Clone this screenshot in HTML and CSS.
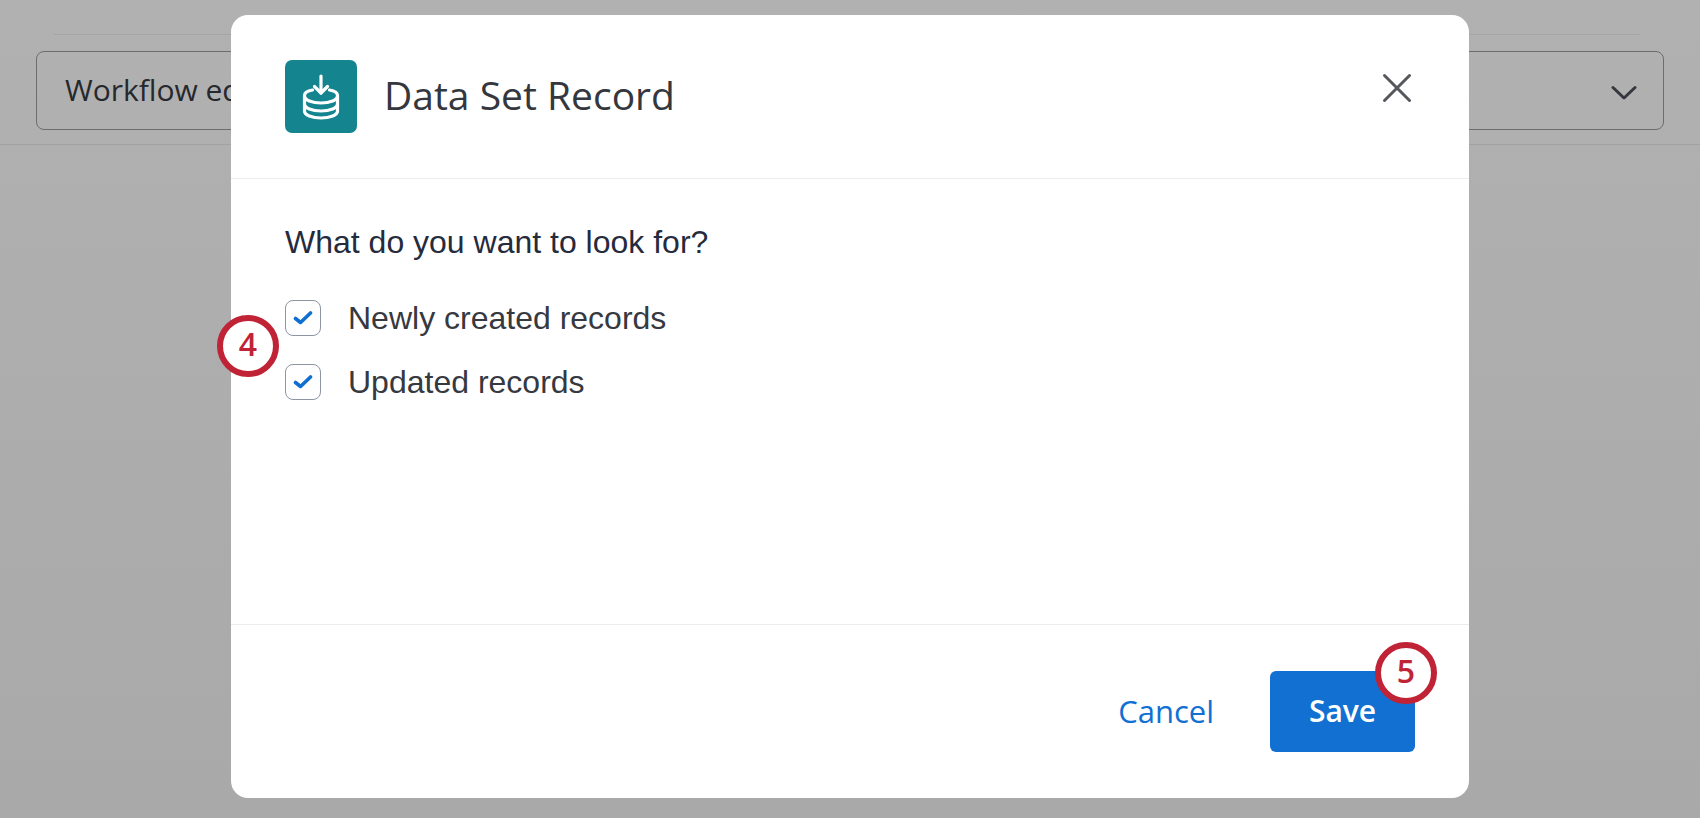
FILE: index.html
```html
<!DOCTYPE html>
<html lang="en">
  <head>
    <meta charset="UTF-8" />
    <title>Data Set Record</title>
    <link rel="stylesheet" href="styles.css">
  </head>
  <body>
    <div class="page">
      <div class="top-line"></div>
      <div class="select-box">
        <span class="select-text">Workflow editor</span>
        <svg class="select-arrow" viewBox="0 0 26 16" width="26" height="16">
          <path d="M2 2.5 L13 13 L24 2.5" fill="none" stroke="#34373d" stroke-width="3" stroke-linecap="round" stroke-linejoin="round" />
        </svg>
      </div>
      <div class="bottom-line"></div>
    </div>

    <div class="modal">
      <div class="modal-header">
        <div class="task-icon">
          <svg viewBox="0 0 72 72" width="72" height="72">
            <g fill="none" stroke="#fff" stroke-width="3.2" stroke-linecap="round" stroke-linejoin="round">
              <path d="M36 15 V32" />
              <path d="M29.5 25.5 L36 32 L42.5 25.5" />
              <path d="M27.5 29 C22 30 19.5 32 19.5 34.5 V50 C19.5 54 27 57 36 57 C45 57 52.5 54 52.5 50 V34.5 C52.5 32 50 30 44.5 29" />
              <path d="M19.5 35 C19.5 39 27 42 36 42 C45 42 52.5 39 52.5 35" />
              <path d="M19.5 43 C19.5 47 27 50 36 50 C45 50 52.5 47 52.5 43" />
            </g>
          </svg>
        </div>
        <h2 class="modal-title">Data Set Record</h2>
        <svg class="close-icon" viewBox="0 0 30 30" width="30" height="30">
          <path d="M2.5 2.5 L27.5 27.5 M27.5 2.5 L2.5 27.5" fill="none" stroke="#54575c" stroke-width="3" stroke-linecap="round" />
        </svg>
      </div>

      <div class="modal-body">
        <p class="question">What do you want to look for?</p>
        <label class="check-row">
          <span class="checkbox">
            <svg viewBox="0 0 20 16" width="20" height="16">
              <path d="M2.5 8.5 L7.5 12.5 L17.5 3" fill="none" stroke="#0f6fd1" stroke-width="3.6" stroke-linecap="round" stroke-linejoin="round" />
            </svg>
          </span>
          Newly created records
        </label>
        <label class="check-row">
          <span class="checkbox">
            <svg viewBox="0 0 20 16" width="20" height="16">
              <path d="M2.5 8.5 L7.5 12.5 L17.5 3" fill="none" stroke="#0f6fd1" stroke-width="3.6" stroke-linecap="round" stroke-linejoin="round" />
            </svg>
          </span>
          Updated records
        </label>
      </div>

      <div class="modal-footer">
        <a class="cancel-link">Cancel</a>
        <button class="save-btn">Save</button>
      </div>

      <span class="step-badge step-4">4</span>
      <span class="step-badge step-5">5</span>
    </div>
  </body>
</html>
```

FILE: styles.css
```css
html,
body {
  margin: 0;
  height: 100%;
}
body {
  width: 1700px;
  height: 818px;
  overflow: hidden;
  position: relative;
  background: linear-gradient(#b1b1b1, #a9a9a9);
  font-family: "Liberation Sans", Arial, sans-serif;
}
.page {
  padding-top: 34px;
}
.top-line {
  height: 1px;
  margin: 0 60px 0 54px;
  background: #a5a5a5;
}
.select-box {
  display: flex;
  align-items: center;
  justify-content: space-between;
  box-sizing: border-box;
  height: 79px;
  margin: 16px 36px 0;
  padding: 0 26px 0 28px;
  border: 1px solid #6d6d6d;
  border-radius: 8px;
}
.select-text {
  font-family: "Open Sans", sans-serif;
  font-size: 30px;
  color: #26282d;
  margin-bottom: 2px;
}
.select-arrow {
  margin-top: 5px;
}
.bottom-line {
  height: 1px;
  margin-top: 14px;
  background: #a2a2a2;
}
.modal {
  position: absolute;
  left: 231px;
  top: 15px;
  width: 1238px;
  height: 783px;
  display: flex;
  flex-direction: column;
  background: #fff;
  border-radius: 17px;
}
.modal-header {
  display: flex;
  align-items: center;
  box-sizing: border-box;
  height: 164px;
  padding: 0 54px 0;
  border-bottom: 1px solid #ececec;
}
.task-icon {
  width: 72px;
  height: 73px;
  display: flex;
  align-items: center;
  justify-content: center;
  background: #14848f;
  border-radius: 7px;
}
.modal-title {
  flex: 1;
  margin: 0 0 5px 27px;
  font-family: "Open Sans", sans-serif;
  font-size: 39px;
  font-weight: 400;
  color: #34373d;
}
.close-icon {
  margin: 0 3px 17px 0;
}
.modal-body {
  flex: 1;
  padding: 43px 54px 0;
}
.question {
  margin: 0 0 38px;
  font-size: 32px;
  line-height: 40px;
  color: #252b3c;
}
.check-row {
  display: flex;
  align-items: center;
  height: 36px;
  margin-bottom: 28px;
  font-size: 32px;
  color: #36393f;
}
.checkbox {
  width: 36px;
  height: 36px;
  box-sizing: border-box;
  display: flex;
  align-items: center;
  justify-content: center;
  margin-right: 27px;
  border: 1px solid #8d94a3;
  border-radius: 8px;
}
.modal-footer {
  display: flex;
  align-items: center;
  justify-content: flex-end;
  box-sizing: border-box;
  height: 174px;
  padding: 0 54px 0;
  border-top: 1px solid #ececec;
}
.cancel-link {
  margin: 0 56px 2px 0;
  font-family: "Open Sans", sans-serif;
  font-size: 31px;
  color: #1170d2;
}
.save-btn {
  width: 145px;
  height: 81px;
  padding: 0 0 2px;
  border: none;
  border-radius: 6px;
  background: #1170d2;
  color: #fff;
  font-family: "Open Sans", sans-serif;
  font-size: 30px;
  font-weight: 600;
}
.step-badge {
  position: absolute;
  box-sizing: border-box;
  width: 62px;
  height: 62px;
  padding-bottom: 5px;
  display: flex;
  align-items: center;
  justify-content: center;
  background: #fff;
  border: 6px solid #c02336;
  border-radius: 50%;
  color: #c02336;
  font-family: "Open Sans", sans-serif;
  font-size: 32px;
  font-weight: 600;
}
.step-4 {
  left: -14px;
  top: 300px;
}
.step-5 {
  left: 1144px;
  top: 627px;
}
```
